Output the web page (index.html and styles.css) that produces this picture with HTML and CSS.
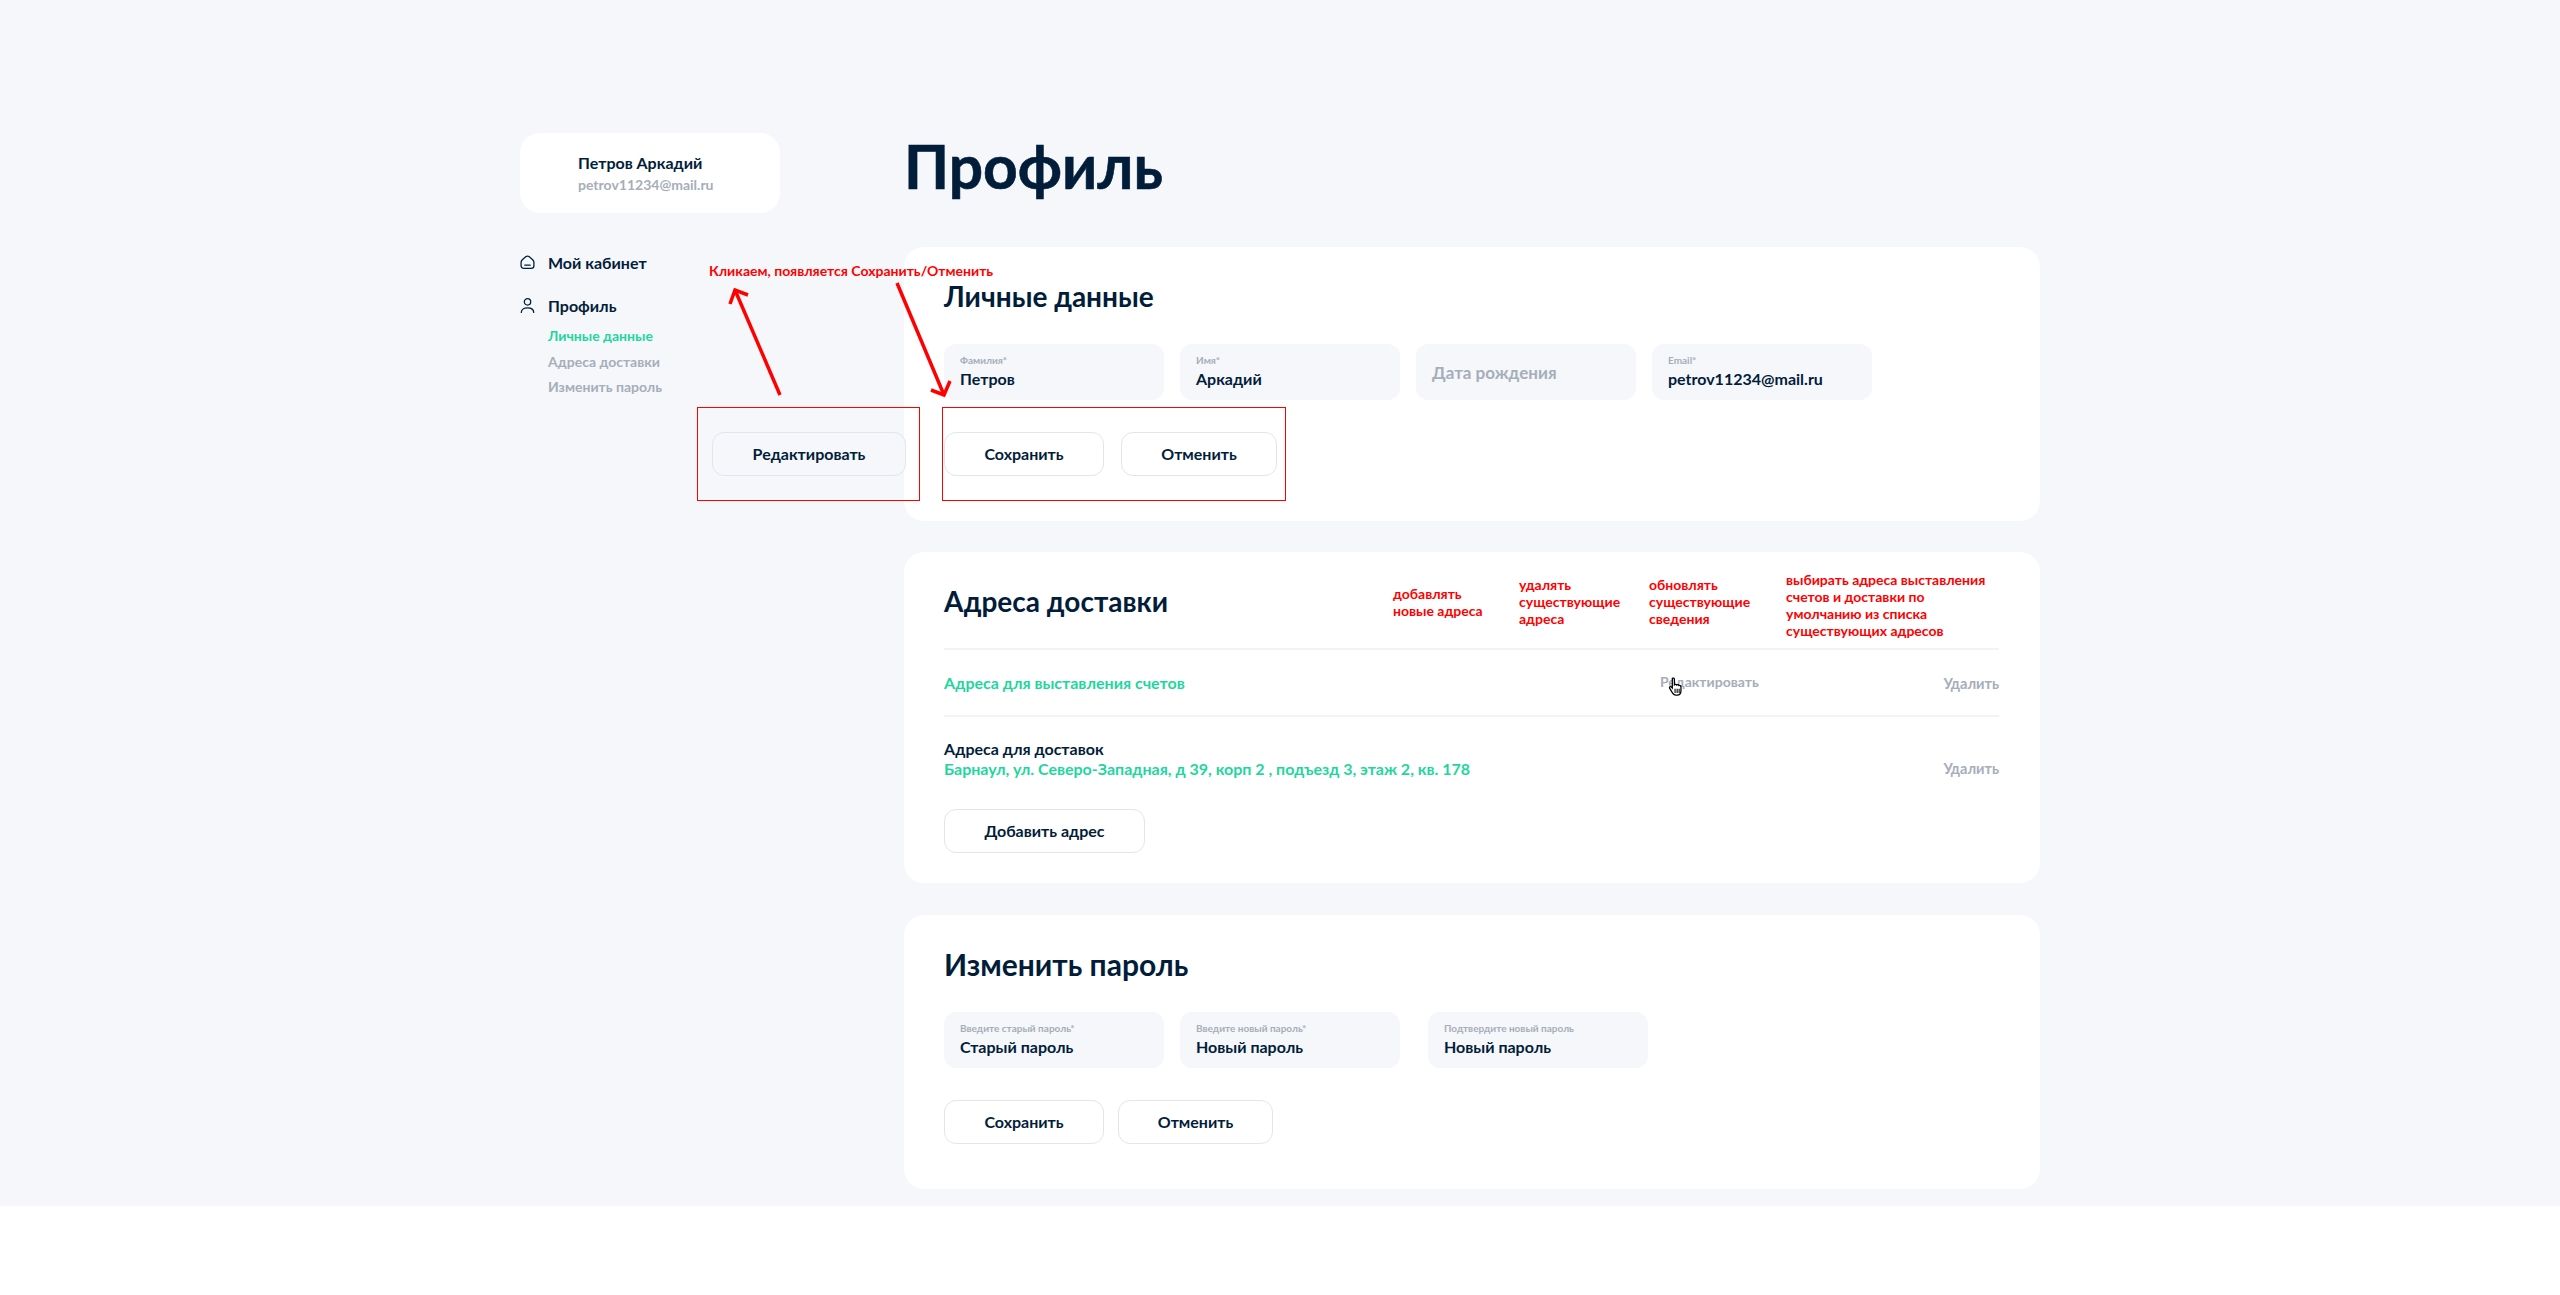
FILE: index.html
```html
<!DOCTYPE html>
<html lang="ru">
<head>
    <meta charset="UTF-8">
    <title>Профиль</title>
    <link rel="stylesheet" href="styles.css">
</head>
<body>
    <div class="page">
        <aside class="sidebar">
            <div class="user-card">
                <div class="user-name">Петров Аркадий</div>
                <div class="user-email">petrov11234@mail.ru</div>
            </div>
            <nav class="side-nav">
                <a class="nav-item">
                    <svg class="nav-icon" viewBox="0 0 14 14" fill="none" stroke="#021d3a" stroke-width="1.2"><path d="M1 6.700C1 5.500 1.600 4.800 2.400 4.100L5.600 1.500C6.400.9 7.600.9 8.400 1.500L11.600 4.100C12.400 4.800 13 5.500 13 6.700V10C13 11.500 12 12.500 10.500 12.500H3.500C2 12.500 1 11.500 1 10Z"/><path d="M4.500 9.500h5" stroke-linecap="round"/></svg>
                    Мой кабинет
                </a>
                <a class="nav-item nav-item-profile">
                    <svg class="nav-icon" viewBox="0 0 14 14" fill="none" stroke="#021d3a" stroke-width="1.2"><circle cx="7" cy="3.600" r="3"/><path d="M1.200 13.500C1.200 10.500 4 9.200 7 9.200S12.800 10.500 12.800 13.500" stroke-linecap="round"/></svg>
                    Профиль
                </a>
                <div class="sub-nav">
                    <a class="sub-link active">Личные данные</a>
                    <a class="sub-link">Адреса доставки</a>
                    <a class="sub-link">Изменить пароль</a>
                </div>
            </nav>
        </aside>

        <main class="content">
            <h1>Профиль</h1>

            <section class="card card-personal">
                <h2>Личные данные</h2>
                <div class="fields">
                    <div class="field"><span class="field-label">Фамилия*</span><span class="field-value">Петров</span></div>
                    <div class="field"><span class="field-label">Имя*</span><span class="field-value">Аркадий</span></div>
                    <div class="field field-empty"><span class="field-placeholder">Дата рождения</span></div>
                    <div class="field"><span class="field-label">Email*</span><span class="field-value">petrov11234@mail.ru</span></div>
                </div>
                <div class="actions">
                    <button class="btn btn-save">Сохранить</button>
                    <button class="btn btn-cancel">Отменить</button>
                </div>
            </section>

            <section class="card card-address">
                <h2>Адреса доставки</h2>
                <div class="address-row address-billing">
                    <span class="green">Адреса для выставления счетов</span>
                    <span class="row-link row-edit">Редактировать</span>
                    <span class="row-link row-delete">Удалить</span>
                </div>
                <div class="address-row address-delivery">
                    <div>
                        <div class="address-title">Адреса для доставок</div>
                        <div class="green">Барнаул, ул. Северо-Западная, д 39, корп 2 , подъезд 3, этаж 2, кв. 178</div>
                    </div>
                    <span class="row-link">Удалить</span>
                </div>
                <button class="btn btn-add">Добавить адрес</button>
            </section>

            <section class="card card-password">
                <h2>Изменить пароль</h2>
                <div class="fields">
                    <div class="field"><span class="field-label">Введите старый пароль*</span><span class="field-value">Старый пароль</span></div>
                    <div class="field"><span class="field-label">Введите новый пароль*</span><span class="field-value">Новый пароль</span></div>
                    <div class="field field-far"><span class="field-label">Подтвердите новый пароль</span><span class="field-value">Новый пароль</span></div>
                </div>
                <div class="actions actions-tight">
                    <button class="btn btn-save">Сохранить</button>
                    <button class="btn btn-cancel2">Отменить</button>
                </div>
            </section>
        </main>

        <!-- notes drawn on top of the mockup -->
        <button class="btn btn-edit-note">Редактировать</button>
        <div class="red-box box-left"></div>
        <div class="red-box box-right"></div>
        <div class="note note-click">Кликаем, появляется Сохранить/Отменить</div>
        <div class="note note-add">добавлять<br>новые адреса</div>
        <div class="note note-del">удалять<br>существующие<br>адреса</div>
        <div class="note note-upd">обновлять<br>существующие<br>сведения</div>
        <div class="note note-pick">выбирать адреса выставления<br>счетов и доставки по<br>умолчанию из списка<br>существующих адресов</div>
        <svg class="arrows" viewBox="0 0 2560 1295" fill="none" stroke="#ff0000" stroke-width="3.500">
            <path d="M780 395 735 290"/>
            <path d="M730 304 735 290 748 295"/>
            <path d="M897 283 944 395"/>
            <path d="M931 390 944 395 950 381"/>
        </svg>
        <svg class="cursor" viewBox="0 0 16 22">
            <path d="M4.500 1.500c1-.8 2.300-.2 2.300 1v6c.8-.7 2-.6 2.500.3.800-.6 2-.4 2.400.5 1-.4 2.300.3 2.300 1.500v4.700c0 2.600-1.700 4.500-4.300 4.500H8.500c-1.700 0-2.800-.8-3.700-2.300L1.500 12.300c-.6-1.100.9-2.400 2-1.300l1 1V2.500z" fill="#fff" stroke="#000" stroke-width="1.400"/>
            <path d="M7.500 13v4.500M9.800 13v4.500M12 13v4.500" stroke="#000" stroke-width="1.200"/>
        </svg>
    </div>
</body>
</html>
```

FILE: styles.css
```css
* {
    box-sizing: border-box;
}
body {
    margin: 0;
    background: #fff;
    font-family: Lato, "Noto Sans", sans-serif;
    color: #021d3a;
}
.page {
    position: relative;
    display: flex;
    height: 1206px;
    padding: 133px 0 0 520px;
    background: #f5f7fb;
}
.sidebar {
    width: 260px;
    margin-right: 124px;
}
.user-card {
    height: 80px;
    padding: 19px 0 0 58px;
    background: #fff;
    border-radius: 20px;
}
.user-name {
    font-size: 16px;
    font-weight: 700;
    line-height: 22px;
}
.user-email {
    font-size: 14px;
    font-weight: 700;
    line-height: 22px;
    color: #a5aeb9;
}
.side-nav {
    margin-top: 37px;
}
.nav-item {
    display: flex;
    align-items: center;
    gap: 13px;
    height: 24px;
    font-size: 16px;
    font-weight: 700;
}
.nav-item-profile {
    margin-top: 19px;
}
.nav-icon {
    width: 15px;
    height: 15px;
}
.sub-nav {
    display: flex;
    flex-direction: column;
    margin: 6px 0 0 28px;
}
.sub-link {
    height: 25.500px;
    font-size: 14px;
    font-weight: 700;
    line-height: 25px;
    color: #a5aeb9;
}
.sub-link.active {
    color: #1fd69e;
}
.content {
    width: 1136px;
}
h1 {
    margin: 0;
    height: 114px;
    font-size: 60.500px;
    font-weight: 700;
    line-height: 66px;
    -webkit-text-stroke: 0.6px #021d3a;
}
h2 {
    margin: 0;
    font-size: 28px;
    font-weight: 700;
    line-height: 36px;
}
.card {
    padding: 31px 40px 0;
    background: #fff;
    border-radius: 20px;
}
.card-personal {
    height: 274px;
}
.card-address {
    height: 331px;
    margin-top: 31px;
}
.card-password {
    height: 274px;
    margin-top: 32px;
}
.card-password h2 {
    font-size: 30px;
}
.fields {
    display: flex;
    gap: 16px;
    margin-top: 30px;
}
.field {
    display: flex;
    flex-direction: column;
    width: 220px;
    height: 56px;
    padding: 10px 16px 0;
    background: #f5f7fb;
    border-radius: 12px;
}
.field-far {
    margin-left: 12px;
}
.field-label {
    font-size: 10px;
    font-weight: 700;
    line-height: 12px;
    color: #a5aeb9;
}
.field-value {
    margin-top: 1px;
    font-size: 16px;
    font-weight: 700;
    line-height: 24px;
}
.field-placeholder {
    margin-top: 7px;
    font-size: 17px;
    font-weight: 700;
    line-height: 24px;
    color: #a5aeb9;
}
.actions {
    display: flex;
    gap: 17px;
    margin-top: 32px;
}
.actions-tight {
    gap: 14px;
}
.btn {
    height: 44px;
    padding: 0 0 2px;
    background: #fff;
    border: 1px solid #e1e5ee;
    border-radius: 12px;
    font-family: inherit;
    font-size: 16px;
    font-weight: 700;
    color: #021d3a;
}
.btn-save {
    width: 160px;
}
.btn-cancel {
    width: 156px;
}
.btn-cancel2 {
    width: 155px;
}
.btn-add {
    display: block;
    width: 201px;
    margin-top: 18px;
}
.address-row {
    display: flex;
    align-items: center;
    justify-content: space-between;
    width: 1055px;
    border-top: 2px solid #f1f3f6;
    font-size: 16px;
    font-weight: 700;
}
.card-address h2 {
    margin-bottom: 29px;
}
.address-billing {
    position: relative;
    height: 67px;
}
.address-delivery {
    height: 76px;
    align-items: flex-end;
    padding-bottom: 12px;
    line-height: 20px;
}
.green {
    color: #1fd69e;
}
.row-link {
    font-size: 14.500px;
    color: #a5aeb9;
}
.row-delete {
    padding-top: 2px;
}
.row-edit {
    position: absolute;
    left: 716px;
    top: 23px;
    font-size: 14px;
}
.btn-edit-note {
    position: absolute;
    left: 712px;
    top: 432px;
    width: 194px;
    background: #f5f7fb;
}
.red-box {
    position: absolute;
    top: 407px;
    height: 94px;
    border: 1px solid #ff0000;
}
.box-left {
    left: 697px;
    width: 223px;
}
.box-right {
    left: 942px;
    width: 344px;
}
.note {
    position: absolute;
    font-size: 14px;
    font-weight: 700;
    line-height: 17px;
    color: #ff0000;
    white-space: nowrap;
}
.note-click {
    left: 709px;
    top: 262px;
}
.note-add {
    left: 1393px;
    top: 585px;
}
.note-del {
    left: 1519px;
    top: 576px;
}
.note-upd {
    left: 1649px;
    top: 576px;
}
.note-pick {
    left: 1786px;
    top: 571px;
}
.arrows {
    position: absolute;
    left: 0;
    top: 0;
    width: 2560px;
    height: 1295px;
    pointer-events: none;
}
.cursor {
    position: absolute;
    left: 1668px;
    top: 677px;
    width: 15px;
    height: 20px;
}
```
